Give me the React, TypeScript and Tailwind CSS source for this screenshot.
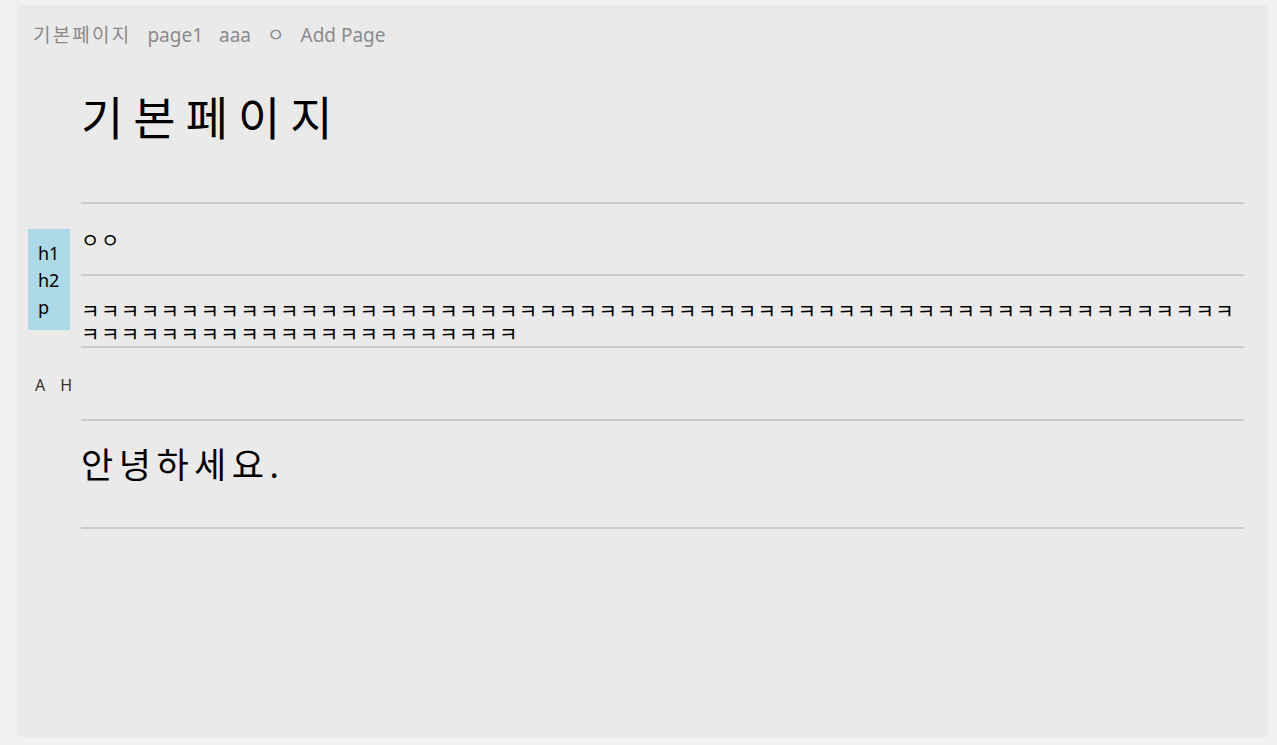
const font = 'font-["Noto_Sans","Noto_Sans_CJK_KR",sans-serif]'

const navItems = ['page1', 'aaa', 'ㅇ', 'Add Page']

function Block({
  gutter,
  className,
  children,
}: {
  gutter?: React.ReactNode
  className: string
  children?: React.ReactNode
}) {
  return (
    <div className="flex">
      <div className="relative flex w-[63px] shrink-0 items-center">{gutter}</div>
      <div className={`flex-1 border-b-2 border-[#cbcbcb] ${className}`}>{children}</div>
    </div>
  )
}

export default function App() {
  const kk = 'ㅋ'.repeat(80)

  return (
    <div className={`flex h-[745px] bg-[#f1f1f1] pt-[5px] pr-[9px] pb-[8px] pl-[18px] ${font}`}>
      <div className="flex flex-1 flex-col bg-[#eaeaea] pr-[24px]">
        <nav className="flex h-[60px] items-center gap-[16px] pl-[15px] text-[19px] text-[#8a8a8a]">
          <span className="tracking-[2.2px]">기본페이지</span>
          {navItems.map((n) => (
            <span key={n}>{n}</span>
          ))}
        </nav>

        <Block className="h-[139px]">
          <h1 className="mt-[24px] text-[46px] leading-[56px] tracking-[10px] text-black">기본페이지</h1>
        </Block>

        <Block
          className="h-[72px] pt-[25px]"
          gutter={
            <div className="absolute top-[25px] left-[10px] z-10 w-[42px] bg-[#add8e6] pt-[11px] pb-[9px] pl-[10px] text-[18px] leading-[27px] text-black">
              <div>h1</div>
              <div>h2</div>
              <div>p</div>
            </div>
          }
        >
          <p className="text-[20px] leading-[23px] tracking-[1.5px] text-black">ㅇㅇ</p>
        </Block>

        <Block className="h-[72px] pt-[24px]">
          <p className="break-all text-[20px] leading-[23px] tracking-[1.5px] text-black">{kk}</p>
        </Block>

        <Block
          className="h-[73px]"
          gutter={
            <div className="flex gap-[15px] pl-[17px] text-[16px] text-[#333]">
              <span>A</span>
              <span>H</span>
            </div>
          }
        />

        <Block className="h-[108px] pt-[21px]">
          <h2 className="text-[35px] leading-[46px] tracking-[5.5px] text-black">안녕하세요.</h2>
        </Block>
      </div>
    </div>
  )
}
